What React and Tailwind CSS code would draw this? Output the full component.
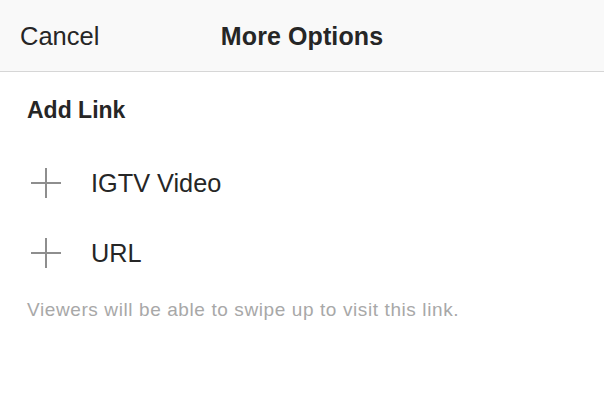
export default function App() {
  const rows = ['IGTV Video', 'URL'];
  return (
    <div className="w-[604px] h-[420px] bg-white" style={{ fontFamily: '"Liberation Sans", Arial, sans-serif' }}>
      <div className="relative h-[72px] bg-[#f9f9f9] border-b border-[#d6d6d6] flex items-center justify-center">
        <span className="absolute left-[20px] top-[21px] text-[25.5px] leading-[30px] text-[#262626]">Cancel</span>
        <span className="text-[25px] leading-[30px] font-bold text-[#262626] tracking-[0.1px]">More Options</span>
      </div>
      <div className="px-[27px]">
        <div className="mt-[24px] text-[23px] leading-[28px] font-bold text-[#262626]">Add Link</div>
        <div className="mt-[24px]">
          {rows.map(r => (
            <div key={r} className="h-[70px] flex items-center">
              <svg width="32" height="32" viewBox="0 0 32 32" className="ml-[3px] shrink-0">
                <path d="M16 1v30M1 16h30" stroke="#8e8e8e" strokeWidth="2" fill="none" />
              </svg>
              <span className="ml-[29px] text-[25.3px] leading-[30px] text-[#262626]">{r}</span>
            </div>
          ))}
        </div>
        <div className="mt-[11px] text-[19px] leading-[22px] text-[#a8a8a8] tracking-[0.6px]">Viewers will be able to swipe up to visit this link.</div>
      </div>
    </div>
  );
}
